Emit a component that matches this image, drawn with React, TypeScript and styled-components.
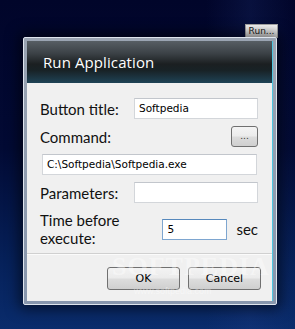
import React from 'react'
import styled, { createGlobalStyle } from 'styled-components'

const GlobalStyle = createGlobalStyle`
  html, body {
    margin: 0;
    padding: 0;
  }
  body {
    width: 295px;
    height: 329px;
    overflow: hidden;
    background: linear-gradient(180deg, #01052a 0%, #020a34 45%, #06215a 80%, #0a2c6c 100%);
    font-family: "Open Sans", "DejaVu Sans", sans-serif;
  }
`

const Desktop = styled.div`
  position: relative;
  width: 295px;
  height: 329px;
  display: flex;
  flex-direction: column;
  background: linear-gradient(90deg, transparent 0%, transparent 70%, rgba(40, 70, 150, 0.18) 85%, transparent 100%);
`

const TopBar = styled.div`
  display: flex;
  justify-content: flex-end;
  padding: 24px 17px 0 0;
  height: 14px;
`

const RunButton = styled.div`
  box-sizing: border-box;
  width: 33px;
  height: 14px;
  background: linear-gradient(180deg, #fafafa 0%, #e6e6e6 100%);
  border: 1px solid #a8a8a8;
  font-family: "DejaVu Sans", sans-serif;
  font-size: 9px;
  line-height: 12px;
  color: #222;
  text-align: center;
`

const Window = styled.div`
  box-sizing: border-box;
  margin: -1px 0 0 23px;
  width: 254px;
  height: 268px;
  padding: 3px;
  border: 1px solid #dfe5ee;
  border-radius: 2px;
  background: linear-gradient(180deg, #9aa4b2 0%, #8796ad 100%);
  box-shadow: 0 0 14px 4px rgba(0, 0, 0, 0.55);
  display: flex;
  flex-direction: column;
`

const Inner = styled.div`
  flex: 1;
  display: flex;
  flex-direction: column;
  border-right: 1px solid #4fc6e0;
  background: #f0f0f0;
`

const Header = styled.div`
  height: 42px;
  display: flex;
  align-items: center;
  padding-left: 16px;
  background: linear-gradient(180deg, #575e64 0%, #3b4146 30%, #1b1f21 55%, #182226 70%, #1f4356 100%);
  color: #fff;
  font-family: "Open Sans", sans-serif;
  font-size: 15px;
  letter-spacing: 0.1px;
`

const Body = styled.div`
  flex: 1;
  display: flex;
  flex-direction: column;
  padding: 15px 14px 0 13px;
  gap: 7px;
`

const Row = styled.div<{ $indent?: number }>`
  display: flex;
  align-items: center;
  justify-content: space-between;
  min-height: 21px;
  padding-left: ${p => p.$indent ?? 0}px;
`

const Label = styled.div`
  font-family: "Lato", "Open Sans", sans-serif;
  font-size: 15px;
  line-height: 18px;
  color: #111;
`

const Input = styled.div<{ $width: number; $focus?: boolean }>`
  box-sizing: border-box;
  width: ${p => p.$width}px;
  height: 21px;
  background: #fff;
  border: 1px solid ${p => (p.$focus ? '#7ea6d0' : '#d3d6da')};
  border-top-color: ${p => (p.$focus ? '#5688bc' : '#c2c6cc')};
  padding: 0 4px;
  font-family: "DejaVu Sans", sans-serif;
  font-size: 10.5px;
  line-height: 19px;
  color: #000;
`

const SmallButton = styled.div`
  box-sizing: border-box;
  width: 27px;
  height: 21px;
  border: 1px solid #707070;
  border-radius: 3px;
  background: linear-gradient(180deg, #f4f4f4 0%, #ebebeb 48%, #dcdcdc 52%, #cfcfcf 100%);
  font-family: "DejaVu Sans", sans-serif;
  font-size: 9px;
  line-height: 19px;
  text-align: center;
  color: #333;
`

const TimeRow = styled.div`
  display: flex;
  align-items: center;
  margin-top: 1px;
`

const TimeInputs = styled.div`
  margin-left: auto;
  display: flex;
  align-items: center;
  gap: 9px;
`

const Separator = styled.div`
  margin-top: 5px;
  height: 1px;
  background: #d0d0d0;
  border-bottom: 1px solid #fbfbfb;
`

const Footer = styled.div`
  display: flex;
  justify-content: flex-end;
  gap: 8px;
  padding: 12px 11px 11px 0;
`

const DialogButton = styled.div`
  box-sizing: border-box;
  width: 73px;
  height: 23px;
  border: 1px solid #707070;
  border-radius: 3px;
  background: linear-gradient(180deg, #f3f3f3 0%, #ebebeb 48%, #dddddd 52%, #cfcfcf 100%);
  font-family: "DejaVu Sans", sans-serif;
  font-size: 11px;
  line-height: 21px;
  text-align: center;
  color: #000;
`

const Watermark = styled.div`
  position: absolute;
  left: 112px;
  top: 252px;
  font-family: "Liberation Serif", serif;
  font-size: 26px;
  font-weight: bold;
  letter-spacing: 1px;
  color: rgba(255, 255, 255, 0.4);
  pointer-events: none;
`

const WatermarkUrl = styled.div`
  position: absolute;
  left: 134px;
  top: 286px;
  font-family: "Liberation Sans", sans-serif;
  font-size: 9px;
  color: rgba(255, 255, 255, 0.45);
  pointer-events: none;
`

function App() {
  return (
    <Desktop>
      <GlobalStyle />
      <TopBar>
        <RunButton>Run...</RunButton>
      </TopBar>
      <Window>
        <Inner>
          <Header>Run Application</Header>
          <Body>
            <Row>
              <Label>Button title:</Label>
              <Input $width={124}>Softpedia</Input>
            </Row>
            <Row>
              <Label>Command:</Label>
              <SmallButton>...</SmallButton>
            </Row>
            <Row $indent={2}>
              <Input $width={215}>C:\Softpedia\Softpedia.exe</Input>
            </Row>
            <Row>
              <Label>Parameters:</Label>
              <Input $width={124}></Input>
            </Row>
            <TimeRow>
              <Label>
                Time before
                <br />
                execute:
              </Label>
              <TimeInputs>
                <Input $width={65} $focus>5</Input>
                <Label>sec</Label>
              </TimeInputs>
            </TimeRow>
          </Body>
          <Separator />
          <Footer>
            <DialogButton>OK</DialogButton>
            <DialogButton>Cancel</DialogButton>
          </Footer>
        </Inner>
      </Window>
      <Watermark>SOFTPEDIA</Watermark>
      <WatermarkUrl>www.softpedia.com</WatermarkUrl>
    </Desktop>
  )
}

export default App
